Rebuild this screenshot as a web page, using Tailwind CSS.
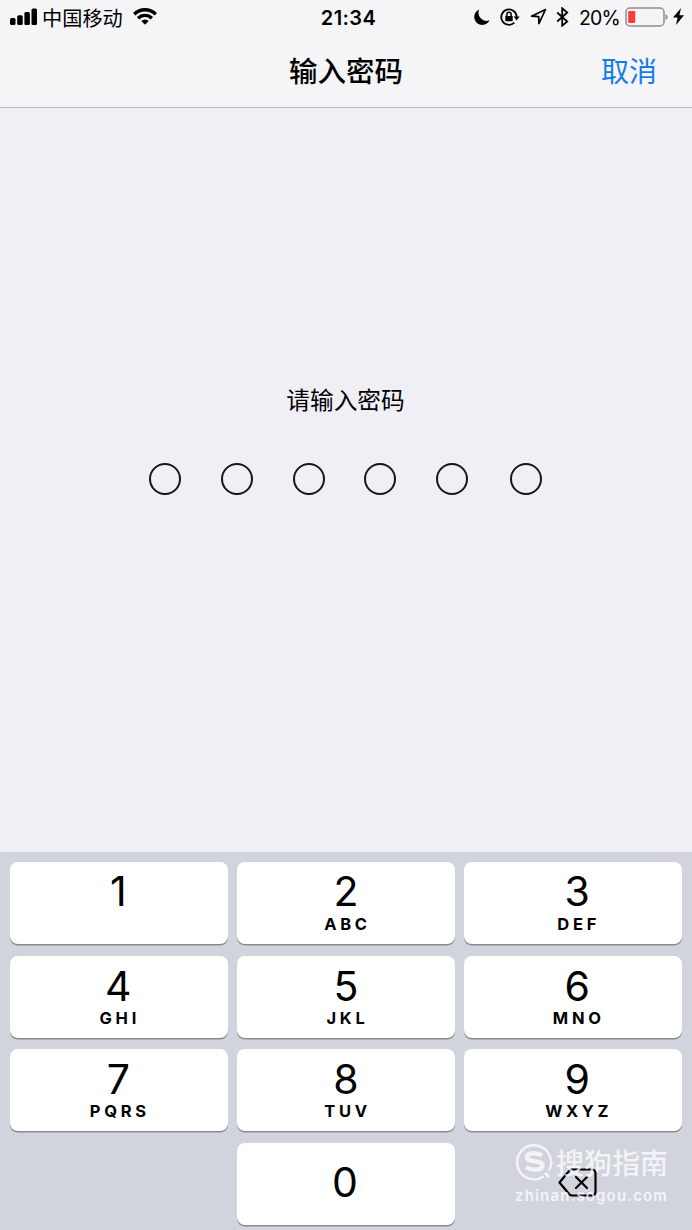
<!DOCTYPE html>
<html lang="zh-CN">
<head>
    <meta charset="UTF-8">
    <meta name="viewport" content="width=device-width, initial-scale=1.0">
    <title>输入密码</title>
    <script src="https://cdn.jsdelivr.net/npm/@tailwindcss/browser@4"></script>
</head>
<body class="relative w-[692px] h-[1230px] overflow-hidden flex flex-col bg-[#efeff5] text-black font-['Inter','Noto_Sans_CJK_SC',sans-serif]">
    <!-- Header -->
    <header class="h-[108px] shrink-0 bg-[#f5f5f7] border-b border-[#bcbcc3]">
        <!-- Status bar -->
        <div class="h-[35px] grid grid-cols-[1fr_auto_1fr] items-center pl-[10px] pr-[7px]">
            <div class="flex items-center">
                <svg class="w-[27px] h-[17px] mb-[2px]" viewBox="0 0 27 17">
                    <rect x="0" y="10" width="5.5" height="7" rx="1.5"/>
                    <rect x="7.2" y="7.2" width="5.5" height="9.8" rx="1.5"/>
                    <rect x="14.4" y="4" width="5.5" height="13" rx="1.5"/>
                    <rect x="21.5" y="0.5" width="5.5" height="16.5" rx="1.5"/>
                </svg>
                <span class="ml-[5px] pt-[2px] text-[20.2px] leading-[30px]">中国移动</span>
                <svg class="ml-[10px] mb-[2px] w-[24px] h-[17px]" viewBox="0 0 24 17" fill="none" stroke="#000" stroke-width="3.4">
                    <path d="M1.2 6.2a15.4 15.4 0 0 1 21.6 0"/>
                    <path d="M5.1 10.2a9.8 9.8 0 0 1 13.8 0"/>
                    <path d="M12 16.8 8.3 13a5.3 5.3 0 0 1 7.4 0z" fill="#000" stroke="none"/>
                </svg>
            </div>
            <div class="pl-[2px] text-[20px] leading-[30px] font-semibold tracking-[0.4px]">21:34</div>
            <div class="flex items-center justify-end">
                <svg class="mb-[2px] w-[16px] h-[16px]" viewBox="0 0 16 16">
                    <path d="M5.3.5A8 8 0 1 0 15.5 11.3 8 8 0 0 1 5.3.5z"/>
                </svg>
                <svg class="ml-[10px] mb-[2px] w-[20px] h-[18px]" viewBox="0 0 20 18" fill="none" stroke="#000" stroke-width="1.8">
                    <path d="M14.3 14.7A7.7 7.7 0 1 1 16.7 9"/>
                    <path d="M13.6 8.6h6l-3 3.8z" fill="#000" stroke="none"/>
                    <rect x="5.3" y="8" width="7.4" height="5.2" rx=".6" fill="#000" stroke="none"/>
                    <path d="M6.9 8.5V6.4a2.1 2.1 0 0 1 4.2 0v2.1" stroke-width="1.5"/>
                </svg>
                <svg class="ml-[10px] mb-[2px] w-[17px] h-[17px]" viewBox="0 0 17 17" fill="none" stroke="#000" stroke-width="1.7" stroke-linejoin="round">
                    <path d="M15.5 1.5 1.5 8.2l7.2.4.2 7z"/>
                </svg>
                <svg class="ml-[9px] mb-[2px] w-[13px] h-[20px]" viewBox="0 0 13 20" fill="none" stroke="#000" stroke-width="1.8">
                    <path d="M1.2 5.5l10 9-5 4.2V1.3l5 4.2-10 9"/>
                </svg>
                <span class="ml-[10px] w-[41px] text-[19.5px] leading-[30px] tracking-[-0.8px]">20%</span>
                <svg class="ml-[5px] mb-[2px] w-[43px] h-[20px]" viewBox="0 0 43 20">
                    <rect x="1" y="1" width="38" height="18" rx="4" fill="none" stroke="#8e8e92" stroke-width="1.5"/>
                    <rect x="3.2" y="4" width="7" height="12" rx="1.2" fill="#fb3b35"/>
                    <path d="M40.5 7q2.2.8 2.2 3t-2.2 3z" fill="#8e8e92"/>
                </svg>
                <svg class="ml-[5px] mr-px mb-[2px] w-[11px] h-[17px]" viewBox="0 0 11 17">
                    <path d="M8 0 0 9.6h4.6L3 17l8-9.8H6.4z"/>
                </svg>
            </div>
        </div>
        <!-- Navigation bar -->
        <div class="h-[72px] grid grid-cols-3 items-center pt-px">
            <h1 class="col-start-2 text-center text-[28.5px] leading-[42px] font-medium">输入密码</h1>
            <a class="text-right pr-[35px] text-[28px] leading-[42px] text-[#167ce5]">取消</a>
        </div>
    </header>

    <!-- Passcode -->
    <main class="flex-1 flex flex-col items-center pt-[275px]">
        <p class="text-[23.7px] leading-[36px] pr-px">请输入密码</p>
        <div class="mt-[44px] mr-[1.4px] flex gap-[39.9px]">
            <span class="size-8 rounded-full border-2 border-[#16161a]"></span>
            <span class="size-8 rounded-full border-2 border-[#16161a]"></span>
            <span class="size-8 rounded-full border-2 border-[#16161a]"></span>
            <span class="size-8 rounded-full border-2 border-[#16161a]"></span>
            <span class="size-8 rounded-full border-2 border-[#16161a]"></span>
            <span class="ml-[1.7px] size-8 rounded-full border-2 border-[#16161a]"></span>
        </div>
    </main>

    <!-- Keypad -->
    <div id="keypad" class="h-[378px] shrink-0 grid grid-cols-3 auto-rows-[82px] gap-x-[9.7px] gap-y-[11.7px] px-[10px] pt-[10px] bg-[#d1d4dc]"></div>

    <!-- Watermark -->
    <div class="absolute left-[515px] top-[1143px] w-[155px] text-white/75">
        <div class="flex items-start">
            <svg class="w-[38px] h-[38px]" viewBox="0 0 38 38" fill="none" stroke="currentColor">
                <path d="M28.5 33.5A17 17 0 1 1 34 27.5" stroke-width="2.5"/>
                <path d="M27 12.5C23 9.5 12 9 12 14.5c0 5.5 15.5 2 15.5 8 0 5.5-11.5 5-16.5 1.5" stroke-width="4.5"/>
                <path d="M30 30l4 4" stroke-width="3"/>
            </svg>
            <span class="ml-[3px] pt-[2px] text-[28px] leading-[38px] font-medium whitespace-nowrap">搜狗指南</span>
        </div>
        <div class="text-[15px] leading-[20px] mt-[3px] tracking-[1.15px] font-semibold whitespace-nowrap">zhinan.sogou.com</div>
    </div>

    <script>
        const keys = [
            ['1', ''], ['2', 'ABC'], ['3', 'DEF'],
            ['4', 'GHI'], ['5', 'JKL'], ['6', 'MNO'],
            ['7', 'PQRS'], ['8', 'TUV'], ['9', 'WXYZ'],
        ];
        const keyClass = 'rounded-[8px] bg-white shadow-[0_1.5px_0_#898a8f] flex flex-col items-center';

        document.getElementById('keypad').innerHTML = keys
            .map(
                ([digit, letters], i) => `
            <button class="${keyClass} ${i < 3 ? 'pt-[8px]' : 'pt-[9px]'} ${i % 3 === 2 ? 'pl-[8px]' : i % 3 === 0 ? 'pr-[1px]' : ''}">
                <span class="text-[41px] leading-[42px]">${digit}</span>
                <span class="${i < 3 ? 'mt-[3px]' : 'mt-[2px]'} pl-[3px] text-[16.5px] leading-[18px] font-bold tracking-[3.7px]">${letters}</span>
            </button>`
            )
            .join('') + `
            <span></span>
            <button class="${keyClass} justify-center pb-[4px] pr-[2px]">
                <span class="text-[41px] leading-[42px]">0</span>
            </button>
            <button class="flex items-center justify-center">
                <svg class="mt-[-4px] ml-[8px] w-[39px] h-[29px]" viewBox="0 0 39 29" fill="none" stroke="#000" stroke-width="2.2" stroke-linecap="round" stroke-linejoin="round">
                    <path d="M14 1.5h19.5q4 0 4 4v18q0 4-4 4H14q-1.5 0-2.5-1L1.5 14.5l10-12q1-1 2.5-1z"/>
                    <path d="M18 9l11 11M29 9 18 20"/>
                </svg>
            </button>`;
    </script>
</body>
</html>
